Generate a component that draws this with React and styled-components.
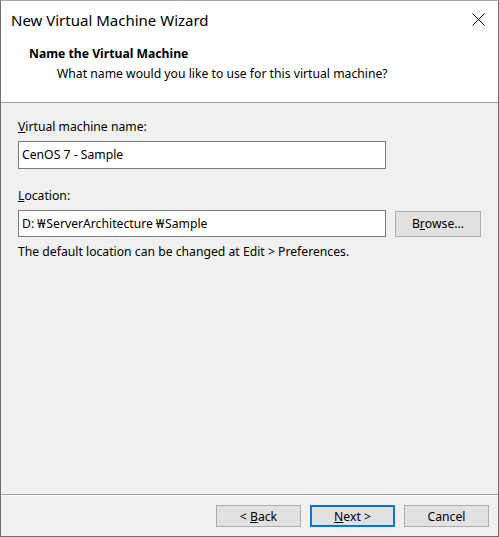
import React from 'react';
import styled, {createGlobalStyle} from 'styled-components';

const Global = createGlobalStyle`
    html, body {
        margin: 0;
        padding: 0;
        background: #ffffff;
    }
    * {
        box-sizing: border-box;
    }
`;

const Window = styled.div`
    width: 499px;
    height: 537px;
    display: flex;
    flex-direction: column;
    border: 1px solid #6f6f6f;
    border-top-color: #a8a8a8;
    background: #f0f0f0;
    font-family: "Noto Sans", "Open Sans", sans-serif;
    font-size: 12.2px;
    color: #000;
`;

const TitleBar = styled.div`
    height: 37px;
    display: flex;
    align-items: center;
    justify-content: space-between;
    padding: 0 13px 0 10px;
    background: #fff;

    h1 {
        margin: 0;
        font-size: 15px;
        font-weight: 400;
        color: #000;
    }
`;

const Header = styled.div`
    background: #fff;
    padding: 8px 0 20px 28px;
    border-bottom: 1px solid #a0a0a0;
    line-height: 16px;

    h2 {
        margin: 0;
        font-size: 12.2px;
        font-weight: 700;
    }

    p {
        margin: 4px 0 0 28px;
    }
`;

const Content = styled.div`
    flex: 1;
    padding: 16px 17px 0 17px;
    line-height: 16px;
`;

const Label = styled.div`
    margin-top: ${p => p.$top || 0}px;
`;

const Row = styled.div`
    display: flex;
    align-items: center;
    gap: 9px;
    margin-top: 6px;
`;

const TextBox = styled.div`
    width: 368px;
    height: ${p => p.$h || 28}px;
    border: 1px solid #7a7a7a;
    background: #fff;
    padding: 0 3px;
    display: flex;
    align-items: center;
    white-space: nowrap;
`;

const Won = styled.span`
    margin: 0 1px 0 3px;
`;

const Hint = styled.div`
    margin-top: 7px;
`;

const Button = styled.button`
    width: ${p => p.$w || 85}px;
    height: ${p => p.$h || 22}px;
    padding: 0;
    font-family: inherit;
    font-size: 12.2px;
    color: #000;
    background: #e1e1e1;
    border: ${p => (p.$primary ? '2px solid #0078d7' : '1px solid #adadad')};
    display: flex;
    align-items: center;
    justify-content: center;
`;

const Footer = styled.div`
    border-top: 1px solid #a0a0a0;
    box-shadow: inset 0 1px 0 #fff;
    display: flex;
    justify-content: flex-end;
    gap: 9px;
    padding: 10px 9px 9px 0;
`;

const CloseIcon = () => (
    <svg width="13" height="13" viewBox="0 0 13 13">
        <path d="M0.5 0.5 L12.5 12.5 M12.5 0.5 L0.5 12.5" stroke="#000" strokeWidth="1" fill="none" />
    </svg>
);

const App = () => {
    return (
        <>
            <Global />
            <Window>
                <TitleBar>
                    <h1>New Virtual Machine Wizard</h1>
                    <CloseIcon />
                </TitleBar>
                <Header>
                    <h2>Name the Virtual Machine</h2>
                    <p>What name would you like to use for this virtual machine?</p>
                </Header>
                <Content>
                    <Label><u>V</u>irtual machine name:</Label>
                    <Row>
                        <TextBox>CenOS 7 - Sample</TextBox>
                    </Row>
                    <Label $top={19}><u>L</u>ocation:</Label>
                    <Row>
                        <TextBox $h={27}>D:<Won>₩</Won>ServerArchitecture<Won>₩</Won>Sample</TextBox>
                        <Button $w={86} $h={26}>B<u>r</u>owse...</Button>
                    </Row>
                    <Hint>The default location can be changed at Edit &gt; Preferences.</Hint>
                </Content>
                <Footer>
                    <Button>&lt;&nbsp;<u>B</u>ack</Button>
                    <Button $primary><u>N</u>ext &gt;</Button>
                    <Button>Cancel</Button>
                </Footer>
            </Window>
        </>
    );
};

export default App;
